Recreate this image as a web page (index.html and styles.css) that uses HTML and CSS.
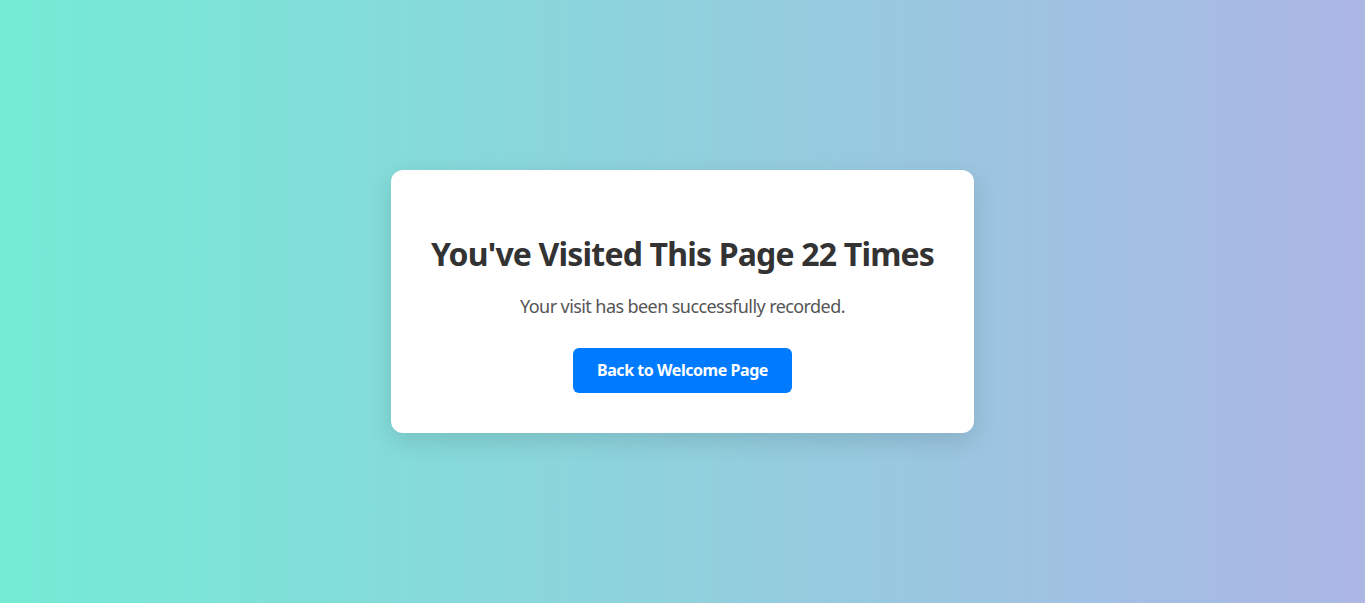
FILE: index.html
```html
<!DOCTYPE html>
<html lang="en">
<head>
<meta charset="utf-8">
<title>Visit Counter</title>
<link rel="stylesheet" href="styles.css">
</head>
<body>
  <main class="card">
    <h1 class="title">You've Visited This Page 22 Times</h1>
    <p class="subtitle">Your visit has been successfully recorded.</p>
    <a class="btn" href="#">Back to Welcome Page</a>
  </main>
</body>
</html>
```

FILE: styles.css
```css
html, body {
  margin: 0;
  padding: 0;
  height: 100%;
}

body {
  font-family: "Noto Sans", "Open Sans", sans-serif;
  background: linear-gradient(to right, #74ebd5, #acb6e5);
  display: flex;
  align-items: center;
  justify-content: center;
  min-height: 100vh;
}

.card {
  background: #fff;
  border-radius: 12px;
  padding: 40px;
  text-align: center;
  box-shadow: 0 8px 24px rgba(0, 0, 0, 0.12);
  display: flex;
  flex-direction: column;
  align-items: center;
}

.title {
  font-size: 32px;
  font-weight: 700;
  line-height: 42.6px;
  color: #333;
  margin: 23px 0 18px;
  letter-spacing: -0.82px;
}

.subtitle {
  font-size: 18px;
  line-height: 24px;
  color: #555;
  margin: 0 0 30px;
  letter-spacing: -0.58px;
}

.btn {
  display: inline-block;
  background: #007bff;
  color: #fff;
  font-size: 16px;
  font-weight: 700;
  line-height: 21px;
  padding: 12px 24px;
  border-radius: 6px;
  text-decoration: none;
  letter-spacing: -0.45px;
}
```
